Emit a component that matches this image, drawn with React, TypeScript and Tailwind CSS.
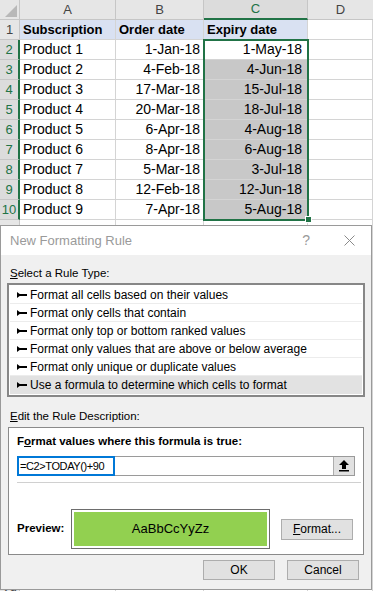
import React from "react";

const data: [string, string, string][] = [
  ["Product 1", "1-Jan-18", "1-May-18"],
  ["Product 2", "4-Feb-18", "4-Jun-18"],
  ["Product 3", "17-Mar-18", "15-Jul-18"],
  ["Product 4", "20-Mar-18", "18-Jul-18"],
  ["Product 5", "6-Apr-18", "4-Aug-18"],
  ["Product 6", "8-Apr-18", "6-Aug-18"],
  ["Product 7", "5-Mar-18", "3-Jul-18"],
  ["Product 8", "12-Feb-18", "12-Jun-18"],
  ["Product 9", "7-Apr-18", "5-Aug-18"],
];

const ruleTypes = [
  "Format all cells based on their values",
  "Format only cells that contain",
  "Format only top or bottom ranked values",
  "Format only values that are above or below average",
  "Format only unique or duplicate values",
  "Use a formula to determine which cells to format",
];

function Bullet() {
  return (
    <svg width="10" height="8" viewBox="0 0 10 8" className="shrink-0">
      <polygon points="0,1 0,7 4,4" fill="#000" />
      <rect x="0" y="3" width="10" height="2" fill="#000" />
    </svg>
  );
}

function Btn({ children, className = "" }: { children: React.ReactNode; className?: string }) {
  return (
    <div
      className={
        "flex items-center justify-center bg-[#e1e1e1] border border-[#adadad] text-[12px] text-black " +
        className
      }
    >
      {children}
    </div>
  );
}

export default function App() {
  const extraRows = Array.from({ length: 19 }, (_, i) => i + 11);
  const cell = "border-r border-b border-[#d4d4d4] h-[20px] flex items-center";
  return (
    <div
      className="relative w-[373px] h-[591px] overflow-hidden bg-white"
      style={{ fontFamily: '"Liberation Sans", Arial, sans-serif' }}
    >
      {/* Spreadsheet */}
      <div className="grid grid-cols-[20px_96px_88px_104px_1fr] text-[14px] text-black">
        {/* header row */}
        <div className="h-[20px] bg-[#e6e6e6] border-r border-b border-[#c6c6c6] relative">
          <svg width="12" height="12" className="absolute right-[2px] bottom-[2px]">
            <polygon points="12,0 12,12 0,12" fill="#b8b8b8" />
          </svg>
        </div>
        <div className="h-[20px] bg-[#e6e6e6] border-r border-b border-[#c6c6c6] flex items-center justify-center text-[#444] text-[13px]">A</div>
        <div className="h-[20px] bg-[#e6e6e6] border-r border-b border-[#c6c6c6] flex items-center justify-center text-[#444] text-[13px]">B</div>
        <div className="h-[20px] bg-[#dcdcdc] border-r border-[#c6c6c6] border-b-2 border-b-[#217346] flex items-center justify-center text-[#217346] text-[13px]">C</div>
        <div className="h-[20px] bg-[#e6e6e6] border-b border-[#c6c6c6] flex items-center justify-center text-[#444] text-[13px]">D</div>

        {/* row 1 */}
        <div className="h-[20px] bg-[#e6e6e6] border-r border-b border-[#c6c6c6] flex items-center justify-center text-[#444] text-[13px]">1</div>
        <div className={cell + " bg-[#d9e1f2] pl-[3px] font-bold text-[13px]"}>Subscription</div>
        <div className={cell + " bg-[#d9e1f2] pl-[3px] font-bold text-[13px]"}>Order date</div>
        <div className={cell + " bg-[#d9e1f2] pl-[3px] font-bold text-[13px]"}>Expiry date</div>
        <div className={cell}></div>

        {data.map((r, i) => (
          <React.Fragment key={i}>
            <div className="h-[20px] bg-[#dcdcdc] border-b border-[#c6c6c6] border-r-2 border-r-[#217346] flex items-center justify-center text-[#217346] text-[13px]">
              {i + 2}
            </div>
            <div className={cell + " pl-[3px]"}>{r[0]}</div>
            <div className={cell + " justify-end pr-[3px]"}>{r[1]}</div>
            <div className={cell + " justify-end pr-[5px] " + (i === 0 ? "bg-white" : "bg-[#c8c8c8]")}>{r[2]}</div>
            <div className={cell}></div>
          </React.Fragment>
        ))}

        {extraRows.map((n) => (
          <React.Fragment key={n}>
            <div className="h-[20px] bg-[#e6e6e6] border-r border-b border-[#c6c6c6] flex items-center justify-center text-[#444] text-[13px]">{n}</div>
            <div className={cell}></div>
            <div className={cell}></div>
            <div className={cell}></div>
            <div className={cell}></div>
          </React.Fragment>
        ))}
      </div>

      {/* selection outline */}
      <div className="absolute left-[203px] top-[39px] w-[106px] h-[182px] border-2 border-[#217346] pointer-events-none" />
      <div className="absolute left-[305px] top-[216px] w-[7px] h-[7px] bg-[#217346] border border-white" />

      {/* Dialog */}
      <div className="absolute left-0 top-[225px] w-[372px] h-[365px] border border-[#9a9a9a] bg-[#f0f0f0] flex flex-col text-[11.5px] text-black">
        <div className="h-[29px] bg-white flex items-center pl-[9px] pr-[16px] shrink-0">
          <span className="text-[13px] text-[#9a9a9a]">New Formatting Rule</span>
          <span className="ml-auto text-[14px] text-[#9a9a9a] mr-[34px]">?</span>
          <svg width="11" height="11" viewBox="0 0 11 11">
            <path d="M0.5 0.5 L10.5 10.5 M10.5 0.5 L0.5 10.5" stroke="#8a8a8a" strokeWidth="1" />
          </svg>
        </div>

        <div className="pl-[9px] mt-[11px] h-[16px] flex items-center">
          <span><u>S</u>elect a Rule Type:</span>
        </div>

        <div className="mx-[6px] mt-[1px] border-2 border-[#878787] bg-white pt-[1px] pb-[1px] flex flex-col">
          {ruleTypes.map((t, i) => (
            <div
              key={i}
              className={
                "h-[18px] flex items-center gap-[3px] pl-[7px] mx-[1px] " +
                (i === 5 ? "bg-[#e2e2e2]" : "border-b border-[#ececec]")
              }
            >
              <Bullet />
              <span className="text-[12px]">{t}</span>
            </div>
          ))}
        </div>

        <div className="pl-[9px] mt-[12px] h-[16px] flex items-center">
          <span><u>E</u>dit the Rule Description:</span>
        </div>

        <div className="mx-[7px] mt-[2px] h-[128px] border border-[#8a8a8a] bg-white flex flex-col px-[8px]">
          <div className="mt-[6px] h-[16px] flex items-center font-bold text-[11.5px]">
            <span>F<u>o</u>rmat values where this formula is true:</span>
          </div>
          <div className="mt-[6px] h-[20px] w-[338px] flex border-y border-[#9a9a9a] border-r">
            <div className="w-[98px] -my-px h-[20px] border-2 border-[#0078d7] flex items-center pl-[1px] text-[11px] tracking-[-0.4px] whitespace-nowrap">
              =C2&gt;TODAY()+90
            </div>
            <div className="flex-1" />
            <div className="w-[21px] bg-[#e1e1e1] border-l border-[#adadad] flex items-center justify-center">
              <svg width="10" height="12" viewBox="0 0 10 12">
                <polygon points="5,0 10,5 7,5 7,9 3,9 3,5 0,5" fill="#000" />
                <rect x="0" y="10" width="10" height="1.5" fill="#000" />
              </svg>
            </div>
          </div>
          <div className="mt-[6px] h-px bg-[#d0d0d0] -mr-[6px]" />
          <div className="mt-[26px] flex items-center">
            <span className="font-bold w-[54px] text-[11.5px]">Preview:</span>
            <div className="w-[199px] h-[40px] border border-[#6d6d6d] p-[2px]">
              <div className="w-full h-full bg-[#92d050] flex items-center justify-center text-[13px] text-black">
                AaBbCcYyZz
              </div>
            </div>
            <Btn className="ml-[11px] w-[72px] h-[21px]">
              <span><u>F</u>ormat...</span>
            </Btn>
          </div>
        </div>

        <div className="mt-[5px] flex pl-[202px] gap-[12px]">
          <Btn className="w-[72px] h-[20px]">OK</Btn>
          <Btn className="w-[72px] h-[20px]">Cancel</Btn>
        </div>
      </div>
    </div>
  );
}
